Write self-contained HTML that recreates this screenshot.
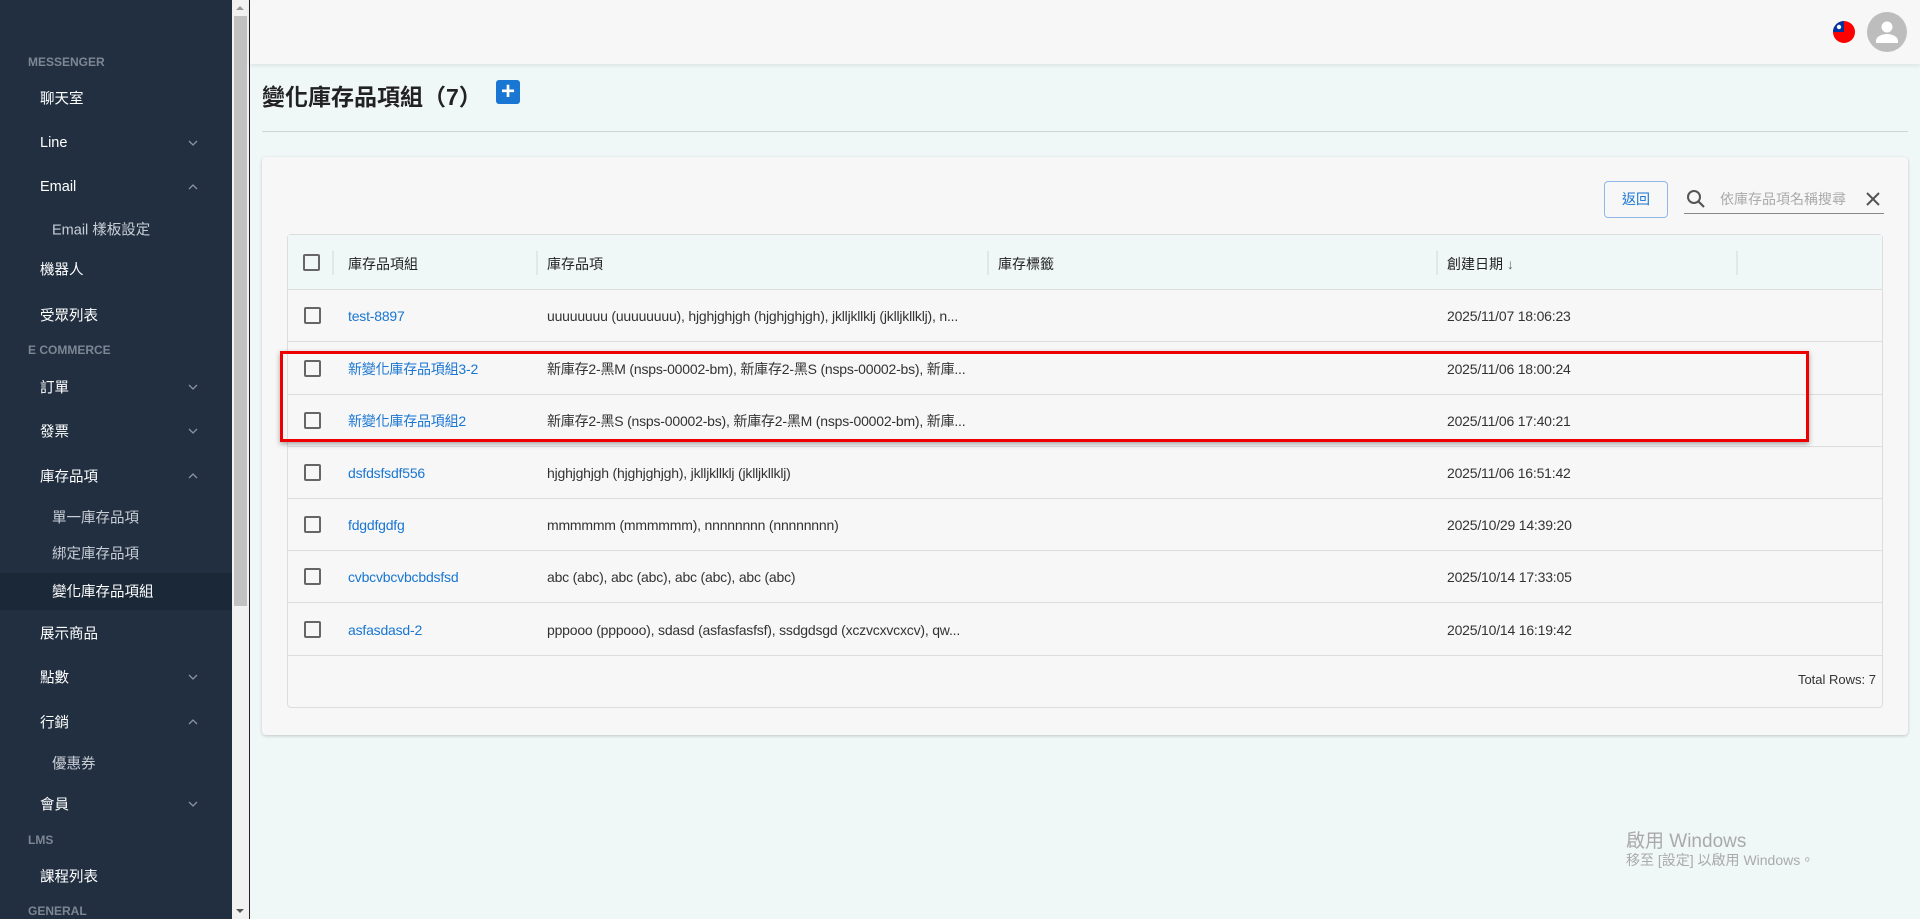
<!DOCTYPE html>
<html><head><meta charset="utf-8">
<style>
*{margin:0;padding:0;box-sizing:border-box}
body{width:1920px;height:919px;overflow:hidden;background:#f0f7f7;font-family:"Liberation Sans","Noto Sans CJK TC",sans-serif;position:relative}
.a{position:absolute}
#sb{left:0;top:0;width:232px;height:919px;background:#212f40;color:#fff}
.sec{position:absolute;left:28px;font-size:12px;color:#7d8693;font-weight:bold;transform:translateY(-50%)}
.it{position:absolute;left:40px;font-size:14.5px;color:#fff;transform:translateY(-50%)}
.sub{position:absolute;left:52px;font-size:14.5px;color:#c9ced6;transform:translateY(-50%)}
.chev{position:absolute;left:188px;width:10px;height:10px;transform:translateY(-50%)}
.ck{position:absolute;left:304px;width:17px;height:17px;border:2px solid #666;border-radius:2px}
.row{position:absolute;left:287px;width:1596px;height:52px;border-bottom:1px solid #ddd;font-size:14px;color:#333;letter-spacing:-0.2px}
.row span{position:absolute;top:50%;transform:translateY(-50%);white-space:nowrap}
.l{left:61px;color:#1976d2}
.c2{left:260px}
.c4{left:1160px}
</style></head><body>
<div id="sb" class="a">
<div class="sec" style="top:62px">MESSENGER</div>
<div class="it" style="top:98px">聊天室</div>
<div class="it" style="top:143px">Line</div>
<div class="it" style="top:187px">Email</div>
<div class="sub" style="top:229px">Email 樣板設定</div>
<div class="it" style="top:269px">機器人</div>
<div class="it" style="top:315px">受眾列表</div>
<div class="sec" style="top:350px">E COMMERCE</div>
<div class="it" style="top:387px">訂單</div>
<div class="it" style="top:431px">發票</div>
<div class="it" style="top:476px">庫存品項</div>
<div class="sub" style="top:517px">單一庫存品項</div>
<div class="sub" style="top:553px">綁定庫存品項</div>
<div class="a" style="left:0;top:573px;width:232px;height:37px;background:#1b2838"></div>
<div class="sub" style="top:591px;color:#fff">變化庫存品項組</div>
<div class="it" style="top:633px">展示商品</div>
<div class="it" style="top:677px">點數</div>
<div class="it" style="top:722px">行銷</div>
<div class="sub" style="top:763px">優惠券</div>
<div class="it" style="top:804px">會員</div>
<div class="sec" style="top:840px">LMS</div>
<div class="it" style="top:876px">課程列表</div>
<div class="sec" style="top:911px">GENERAL</div>
<svg class="chev" style="top:143px" viewBox="0 0 10 10"><path d="M1 3l4 4 4-4" fill="none" stroke="#8a93a0" stroke-width="1.3"/></svg>
<svg class="chev" style="top:187px" viewBox="0 0 10 10"><path d="M1 7l4-4 4 4" fill="none" stroke="#8a93a0" stroke-width="1.3"/></svg>
<svg class="chev" style="top:387px" viewBox="0 0 10 10"><path d="M1 3l4 4 4-4" fill="none" stroke="#8a93a0" stroke-width="1.3"/></svg>
<svg class="chev" style="top:431px" viewBox="0 0 10 10"><path d="M1 3l4 4 4-4" fill="none" stroke="#8a93a0" stroke-width="1.3"/></svg>
<svg class="chev" style="top:476px" viewBox="0 0 10 10"><path d="M1 7l4-4 4 4" fill="none" stroke="#8a93a0" stroke-width="1.3"/></svg>
<svg class="chev" style="top:677px" viewBox="0 0 10 10"><path d="M1 3l4 4 4-4" fill="none" stroke="#8a93a0" stroke-width="1.3"/></svg>
<svg class="chev" style="top:722px" viewBox="0 0 10 10"><path d="M1 7l4-4 4 4" fill="none" stroke="#8a93a0" stroke-width="1.3"/></svg>
<svg class="chev" style="top:804px" viewBox="0 0 10 10"><path d="M1 3l4 4 4-4" fill="none" stroke="#8a93a0" stroke-width="1.3"/></svg>
</div>
<div class="a" style="left:232px;top:0;width:17px;height:919px;background:#f1f1f1"></div>
<div class="a" style="left:234px;top:16px;width:13px;height:590px;background:#c1c1c1"></div>
<div class="a" style="left:236px;top:6px;width:0;height:0;border:4px solid transparent;border-bottom-color:#999;border-top:0"></div>
<div class="a" style="left:236px;top:909px;width:0;height:0;border:4px solid transparent;border-top-color:#555;border-bottom:0"></div>
<div class="a" style="left:249px;top:0;width:1px;height:919px;background:#222"></div>
<div class="a" style="left:250px;top:0;width:1670px;height:64px;background:#f7f7f7;box-shadow:0 2px 4px rgba(0,0,0,.08)"></div>
<svg class="a" style="left:1833px;top:21px" width="22" height="22" viewBox="0 0 22 22"><circle cx="11" cy="11" r="11" fill="#f00"/><path d="M0 11A11 11 0 0 1 11 0V11Z" fill="#0033a0"/><circle cx="6" cy="6" r="2.2" fill="#fff"/></svg>
<svg class="a" style="left:1867px;top:12px" width="40" height="40" viewBox="0 0 40 40"><circle cx="20" cy="20" r="20" fill="#bdbdbd"/><circle cx="20" cy="15" r="5.5" fill="#fff"/><path d="M9 29c0-5 7-7 11-7s11 2 11 7v2H9z" fill="#fff"/></svg>
<div class="a" style="left:262px;top:78px;font-size:23px;color:#222;font-weight:bold">變化庫存品項組（7）</div>
<div class="a" style="left:496px;top:80px;width:24px;height:24px;background:#1976d2;border-radius:3px;color:#fff;font-size:24px;line-height:23px;text-align:center;font-weight:bold">+</div>
<div class="a" style="left:262px;top:131px;width:1646px;height:1px;background:#d0d4d4"></div>
<div class="a" style="left:262px;top:157px;width:1646px;height:578px;background:#f7f7f7;border-radius:4px;box-shadow:0 1px 3px rgba(0,0,0,.2)"></div>
<div class="a" style="left:1604px;top:181px;width:64px;height:37px;border:1px solid #90b8e6;border-radius:4px;color:#1976d2;font-size:14px;text-align:center;line-height:35px">返回</div>
<svg class="a" style="left:1686px;top:189px" width="20" height="20" viewBox="0 0 20 20"><circle cx="8" cy="8" r="6" fill="none" stroke="#555" stroke-width="2"/><path d="M12.5 12.5l5.5 5.5" stroke="#555" stroke-width="2.2"/></svg>
<div class="a" style="left:1720px;top:189px;font-size:14px;color:#aaa">依庫存品項名稱搜尋</div>
<svg class="a" style="left:1865px;top:191px" width="16" height="16" viewBox="0 0 16 16"><path d="M2 2l12 12M14 2L2 14" stroke="#555" stroke-width="2"/></svg>
<div class="a" style="left:1684px;top:213px;width:200px;height:1px;background:#888"></div>
<div class="a" style="left:287px;top:234px;width:1596px;height:474px;border:1px solid #ddd;border-radius:4px;background:#f7f7f7"></div>
<div class="a" style="left:288px;top:235px;width:1594px;height:55px;background:#f0f7f7;border-bottom:1px solid #ddd;font-size:14px;color:#222">
<div class="ck" style="left:15px;top:19px"></div>
<div class="a" style="left:44px;top:16px;width:2px;height:24px;background:#e2e6e6"></div>
<div class="a" style="left:60px;top:19px">庫存品項組</div>
<div class="a" style="left:248px;top:16px;width:2px;height:24px;background:#e2e6e6"></div>
<div class="a" style="left:259px;top:19px">庫存品項</div>
<div class="a" style="left:699px;top:16px;width:2px;height:24px;background:#e2e6e6"></div>
<div class="a" style="left:710px;top:19px">庫存標籤</div>
<div class="a" style="left:1148px;top:16px;width:2px;height:24px;background:#e2e6e6"></div>
<div class="a" style="left:1159px;top:19px">創建日期 <span style="color:#666">↓</span></div>
<div class="a" style="left:1448px;top:16px;width:2px;height:24px;background:#e2e6e6"></div>
</div>
<div class="row" style="top:290px"><div class="ck" style="left:17px;top:17px"></div><span class="l">test-8897</span><span class="c2">uuuuuuuu (uuuuuuuu), hjghjghjgh (hjghjghjgh), jklljkllklj (jklljkllklj), n...</span><span class="c4">2025/11/07 18:06:23</span></div>
<div class="row" style="top:343px"><div class="ck" style="left:17px;top:17px"></div><span class="l">新變化庫存品項組3-2</span><span class="c2">新庫存2-黑M (nsps-00002-bm), 新庫存2-黑S (nsps-00002-bs), 新庫...</span><span class="c4">2025/11/06 18:00:24</span></div>
<div class="row" style="top:395px"><div class="ck" style="left:17px;top:17px"></div><span class="l">新變化庫存品項組2</span><span class="c2">新庫存2-黑S (nsps-00002-bs), 新庫存2-黑M (nsps-00002-bm), 新庫...</span><span class="c4">2025/11/06 17:40:21</span></div>
<div class="row" style="top:447px"><div class="ck" style="left:17px;top:17px"></div><span class="l">dsfdsfsdf556</span><span class="c2">hjghjghjgh (hjghjghjgh), jklljkllklj (jklljkllklj)</span><span class="c4">2025/11/06 16:51:42</span></div>
<div class="row" style="top:499px"><div class="ck" style="left:17px;top:17px"></div><span class="l">fdgdfgdfg</span><span class="c2">mmmmmm (mmmmmm), nnnnnnnn (nnnnnnnn)</span><span class="c4">2025/10/29 14:39:20</span></div>
<div class="row" style="top:551px"><div class="ck" style="left:17px;top:17px"></div><span class="l">cvbcvbcvbcbdsfsd</span><span class="c2">abc (abc), abc (abc), abc (abc), abc (abc)</span><span class="c4">2025/10/14 17:33:05</span></div>
<div class="row" style="top:604px"><div class="ck" style="left:17px;top:17px"></div><span class="l">asfasdasd-2</span><span class="c2">pppooo (pppooo), sdasd (asfasfasfsf), ssdgdsgd (xczvcxvcxcv), qw...</span><span class="c4">2025/10/14 16:19:42</span></div>
<div class="a" style="left:1700px;top:672px;width:176px;text-align:right;font-size:13px;color:#333">Total Rows: 7</div>
<div class="a" style="left:280px;top:351px;width:1529px;height:91px;border:3px solid #e00;box-shadow:0 2px 5px rgba(0,0,0,.35)"></div>
<div class="a" style="left:1626px;top:826px;font-size:19px;color:#aaa">啟用 Windows</div>
<div class="a" style="left:1626px;top:850px;font-size:14px;color:#aaa">移至 [設定] 以啟用 Windows。</div>
</body></html>
